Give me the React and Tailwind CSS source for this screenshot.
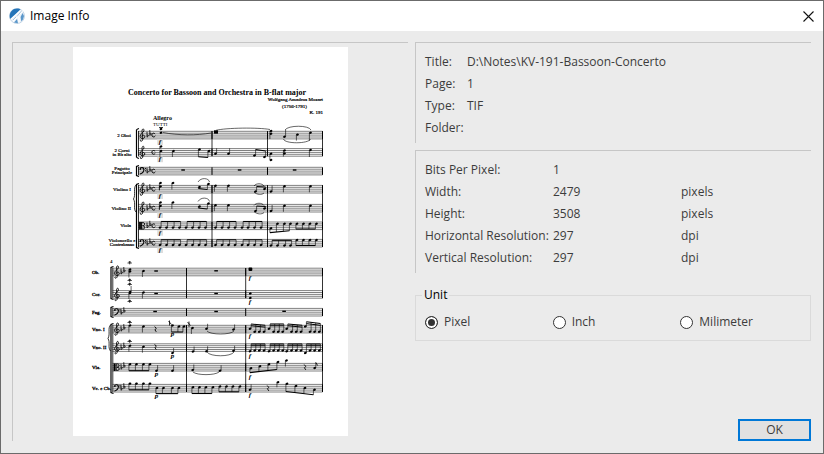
import React, { useState } from "react";

const SERIF = '"Liberation Serif", serif';

const documentRows = [
  { label: "Title:", value: "D:\\Notes\\KV-191-Bassoon-Concerto" },
  { label: "Page:", value: "1" },
  { label: "Type:", value: "TIF" },
  { label: "Folder:", value: "" },
];

const imageRows = [
  { label: "Bits Per Pixel:", value: "1", unit: "" },
  { label: "Width:", value: "2479", unit: "pixels" },
  { label: "Height:", value: "3508", unit: "pixels" },
  { label: "Horizontal Resolution:", value: "297", unit: "dpi" },
  { label: "Vertical Resolution:", value: "297", unit: "dpi" },
];

const units = ["Pixel", "Inch", "Milimeter"];

/* ---------- score drawing ---------- */

const Staff = ({ x, y, bars }) => (
  <g stroke="#000" strokeWidth="0.5">
    {[0, 1, 2, 3, 4].map((i) => (
      <line key={i} x1={x} x2={322.5} y1={y + i * 1.9} y2={y + i * 1.9} />
    ))}
    {bars.map((b) => (
      <line key={b} x1={b} x2={b} y1={y} y2={y + 7.6} strokeWidth="1" />
    ))}
  </g>
);

const Treble = ({ x, y }) => (
  <path
    d={`M${x} ${y + 9.5}c-1.6 1.4-2.4-.8-.9-.9M${x + 0.2} ${y + 9.6}c1 -1 .3-4-.2-9.5c-.1-3 2.2-3.4 1.9-.6c-.3 2-3.9 3-3.8 5.6c.2 3 4.9 2.6 4.7.2c-.2-2.1-3.3-1.7-2.9.2`}
    fill="none"
    stroke="#000"
    strokeWidth="0.9"
  />
);

const Bass = ({ x, y }) => (
  <g fill="none" stroke="#000" strokeWidth="1.1">
    <path d={`M${x - 2} ${y + 2}c.2-2.2 4-2.3 3.9.4c-.1 2-1.8 3.6-4 4.4`} />
    <path d={`M${x - 2.2} ${y + 2}h1.2M${x + 3} ${y + 1.2}h.9M${x + 3} ${y + 3.4}h.9`} />
  </g>
);

const Alto = ({ x, y }) => (
  <g stroke="#000" fill="none">
    <path d={`M${x - 2} ${y}v7.6`} strokeWidth="1.8" />
    <path
      d={`M${x - 0.4} ${y}v7.6M${x} ${y + 0.8}c3.4-1.4 3.2 3.4.6 3c2.8-.4 2.8 4.4-.6 3`}
      strokeWidth="1"
    />
  </g>
);

const Flats = ({ x, y }) => (
  <path
    d={`M${x} ${y + 0.5}v5.4c2.2-1.6 1.6-2.8 0-2M${x + 2.8} ${y - 1.2}v5.4c2.2-1.6 1.6-2.8 0-2`}
    fill="none"
    stroke="#000"
    strokeWidth="0.8"
  />
);

const CommonTime = ({ x, y }) => (
  <path
    d={`M${x + 1.6} ${y + 2.7}c-1.4-1.6-3.4-.6-3.2 1.3c.2 1.9 2.4 2.2 3.4.6`}
    fill="none"
    stroke="#000"
    strokeWidth="1"
  />
);

const clefs = { treble: Treble, bass: Bass, alto: Alto };

const Head = ({ x, y }) => (
  <ellipse cx={x} cy={y} rx="1.4" ry="1.1" transform={`rotate(-20 ${x} ${y})`} />
);

// s: stem length, negative goes up
const Note = ({ x, y, s }) => {
  const sx = s < 0 ? x + 1.1 : x - 1.1;
  return (
    <g>
      <Head x={x} y={y} />
      <line x1={sx} x2={sx} y1={y} y2={y + s} stroke="#000" strokeWidth="0.6" />
    </g>
  );
};

const Beam = ({ notes, from, to = from, double }) => {
  const up = from < notes[0][1];
  const dx = up ? 1.1 : -1.1;
  const first = notes[0][0];
  const last = notes[notes.length - 1][0];
  const at = (x) => from + ((to - from) * (x - first)) / (last - first);
  return (
    <g>
      {notes.map(([x, y]) => (
        <g key={x}>
          <Head x={x} y={y} />
          <line x1={x + dx} x2={x + dx} y1={y} y2={at(x)} stroke="#000" strokeWidth="0.6" />
        </g>
      ))}
      <line x1={first + dx} x2={last + dx} y1={from} y2={to} stroke="#000" strokeWidth="1.1" />
      {double && (
        <line x1={first + dx} x2={last + dx} y1={from + 1.8} y2={to + 1.8} stroke="#000" strokeWidth="1" />
      )}
    </g>
  );
};

const Mark = ({ x, y, boxed, children }) => (
  <g>
    {boxed && <rect x={x - 2.8} y={y - 3} width="5.8" height="5.6" fill="#ddd" />}
    <text x={x} y={y + 1.8} fontSize="7" fontStyle="italic" fontWeight="bold" textAnchor="middle">
      {children}
    </text>
  </g>
);

const Ornament = ({ x, y }) => (
  <path d={`M${x - 2.2} ${y}h4.4M${x - 1.2} ${y - 1}h2.4M${x} ${y - 2}v3.4`} stroke="#000" strokeWidth="0.7" />
);

const Rest = ({ x, y }) => <rect x={x - 1.7} y={y - 0.7} width="3.6" height="1.4" />;

const QuarterRest = ({ x, y }) => (
  <path d={`M${x - 0.8} ${y - 2.5}l1.6 2l-1.4 1.2l1.4 2.2`} fill="none" stroke="#000" strokeWidth="0.9" />
);

const Slur = ({ d }) => <path d={d} fill="none" stroke="#000" strokeWidth="0.6" />;

const firstSystem = [
  { y: 131.3, clef: "treble", flats: true, labels: ["2 Oboi"] },
  { y: 148.6, clef: "treble", labels: ["2 Corni", "in B♭ alto"] },
  { y: 167.3, clef: "bass", flats: true, labels: ["Fagotto", "Principale"] },
  { y: 185.4, clef: "treble", flats: true, labels: ["Violino I"] },
  { y: 204.4, clef: "treble", flats: true, labels: ["Violino II"] },
  { y: 222, clef: "alto", flats: true, labels: ["Viola"] },
  { y: 239.4, clef: "bass", flats: true, labels: ["Violoncello e", "Contrabasso"] },
];

const secondSystem = [
  { y: 268.2, clef: "treble", flats: true, label: "Ob." },
  { y: 290.6, clef: "treble", label: "Cor." },
  { y: 308.4, clef: "bass", flats: true, label: "Fag." },
  { y: 325.3, clef: "treble", flats: true, label: "Vno. I" },
  { y: 343.8, clef: "treble", flats: true, label: "Vno. II" },
  { y: 363.4, clef: "alto", flats: true, label: "Vla." },
  { y: 384.4, clef: "bass", flats: true, label: "Vc. e Cb." },
];

const eighths = (xs, y) => xs.map((x) => [x, y]);

const ViolinOpening = ({ dy }) => (
  <g transform={`translate(0 ${dy})`}>
    <Note x={160.5} y={183} s={7} />
    <Note x={160.5} y={186.5} s={4} />
    <Note x={173} y={183} s={6.5} />
    <Beam notes={[[199.5, 187], [208.5, 184]]} from={188.5} to={189.5} />
    <Slur d="M198 182c3-5 11-4 11.5 0" />
    <Note x={215.5} y={185.7} s={6} />
    <Note x={228.5} y={185.7} s={6} />
    <Beam notes={[[255.5, 191.5], [264.5, 189]]} from={186.5} to={187} />
    <Slur d="M254 186c2-3 8-3 10 0M254 192c3 3 8 3 10 1" />
    <Note x={271} y={191.5} s={-6} />
    <Note x={284.5} y={186.3} s={6} />
    <Note x={310.5} y={186.3} s={6} />
  </g>
);

const sixteenthGroups = [
  [250, 254.7, 259.3, 264],
  [269, 273.6, 278.2, 282.7],
  [286.7, 291.5, 296.2, 301],
  [305.3, 310, 314.6, 319.3],
];

const Score = () => (
  <svg
    viewBox="73 47 275 389"
    className="w-[275px] h-auto bg-white"
    fontFamily={SERIF}
    role="img"
    aria-label="Score page"
  >
    <text x="217" y="95" fontSize="8" fontWeight="bold" textAnchor="middle">
      Concerto for Bassoon and Orchestra in B-flat major
    </text>
    <g fontSize="5" textAnchor="end" stroke="#000" strokeWidth="0.2">
      <text x="323" y="101">Wolfgang Amadeus Mozart</text>
      <text x="307" y="108">(1756-1791)</text>
      <text x="323" y="114">K. 191</text>
    </g>
    <text x="153" y="120" fontSize="6" fontWeight="bold">Allegro</text>
    <text x="153" y="126" fontSize="5">TUTTI</text>

    {/* first system */}
    {firstSystem.map(({ y, clef, flats, labels }) => {
      const Clef = clefs[clef];
      return (
        <g key={y}>
          <Staff x={138} y={y} bars={[212, 267.5, 322.5]} />
          <Clef x={142} y={y} />
          {flats && <Flats x={147} y={y} />}
          <CommonTime x={153.5} y={y} />
          {labels.map((label, i) => (
            <text
              key={label}
              x={labels.length > 1 ? 122 : 131}
              y={y + 5.3 + (labels.length > 1 ? i * 4 - 2.4 : 0)}
              fontSize="5"
              textAnchor={labels.length > 1 ? "middle" : "end"}
              stroke="#000"
              strokeWidth="0.2"
            >
              {label}
            </text>
          ))}
          {clef !== "bass" || y > 200 ? <Mark x={160} y={y + 11} boxed>f</Mark> : null}
        </g>
      );
    })}
    <path
      d="M138.5 131v25M138.500 167v8M138.5 185v62M212 185v62M267.5 185v62M322.5 185v62M212 131v25M267.5 131v25M322.5 131v25"
      stroke="#000"
      strokeWidth="0.8"
    />
    <path
      d="M139 128.5q-2 .5-2.5 1.5v27q.5 1 2.5 1.5M139 165.5l-2.5 1v9l2.5 1M139 183.5l-2.5 1v63l2.5 1"
      fill="none"
      stroke="#000"
      strokeWidth="1.2"
    />
    <path d="M136 185c-3 3 0 10-2.5 14c2.5 4-.5 10 2.5 13" fill="none" stroke="#000" strokeWidth="0.8" />

    <Head x={161} y={132.8} />
    <Head x={161} y={129} />
    <path d="M159 127.5h4" stroke="#000" strokeWidth="0.8" />
    <Slur d="M163 132.5c15 3 34 3 48 .5" />
    <rect x="214" y="130.3" width="4" height="3.4" />
    <Slur d="M216 130.3c10-2.5 42-3 54-.8" />
    <Note x={271} y={131} s={8} />
    <Head x={271} y={133.8} />
    <Note x={284.5} y={136.8} s={-7} />
    <Note x={297.5} y={134.6} s={6} />
    <Note x={310.5} y={132.8} s={8} />
    <Slur d="M285 130c3-5 24-5 26 0M283.500 139c1 5 25 5 27 0" />

    <Note x={161} y={151} s={6} />
    <Note x={161} y={146.5} s={3} />
    <Note x={173.5} y={151} s={6} />
    <Beam notes={[[199.5, 149.5], [209, 151]]} from={156.8} to={157.5} />
    <Note x={215.5} y={153.8} s={-5.5} />
    <Note x={228.5} y={153.8} s={-5.5} />
    <Beam notes={[[254.5, 155.5], [264.5, 157]]} from={149.5} to={151} />
    <Note x={271} y={153.8} s={6} />
    <Head x={271} y={160} />
    <Note x={284.5} y={150.5} s={6} />
    <Head x={284.5} y={153.5} />
    <Note x={310.5} y={150} s={7} />

    <Rest x={183} y={170} />
    <Rest x={239.5} y={170} />
    <Rest x={294.5} y={170} />

    <ViolinOpening dy={0} />
    <ViolinOpening dy={19.5} />

    {[
      [160, 166.5, 173, 179.5],
      [186, 192.5, 199, 205.5],
      [215.5, 222, 228.5, 235],
      [242, 248, 254.5, 261],
    ].map((xs) => (
      <g key={xs[0]}>
        <Beam notes={eighths(xs, 227.6)} from={221.5} />
        <Beam notes={eighths(xs, 245)} from={239.8} />
      </g>
    ))}
    <Beam notes={[[271, 228.3], [277.5, 223.8], [284.5, 223.8], [290.5, 223.8]]} from={232.6} to={230.8} />
    <Beam notes={eighths([297, 303.5, 310, 316.5], 223.8)} from={229} />
    <Beam notes={eighths([271, 277.5, 284.5, 290.5], 245.5)} from={240.3} />
    <Beam notes={eighths([297, 303.5, 310, 316.5], 240)} from={245.5} />

    {/* second system */}
    <text x="110" y="263" fontSize="5" fontWeight="bold">4</text>
    {secondSystem.map(({ y, clef, flats, label }) => {
      const Clef = clefs[clef];
      return (
        <g key={y}>
          <Staff x={112.5} y={y} bars={[186.5, 245.7, 322.5]} />
          <Clef x={116.5} y={y} />
          {flats && <Flats x={121} y={y} />}
          <text x="92" y={y + 5.5} fontSize="5" stroke="#000" strokeWidth="0.3">
            {label}
          </text>
        </g>
      );
    })}
    <path
      d="M112.8 268v30M112.8 308v8M112.8 325v67M186.5 268v30M186.5 325v67M245.7 268v30M245.7 325v67M322.5 268v30M322.5 325v67"
      stroke="#000"
      strokeWidth="0.8"
    />
    <path
      d="M113.5 266.5l-2.5 1v31l2.5 1M113.5 306.5l-2.5 1v9l2.5 1M113.5 323.5l-2.5 1v68l2.5 1"
      fill="none"
      stroke="#000"
      strokeWidth="1.2"
    />
    <path d="M110.5 325c-3 3 0 9-2.5 13.5c2.5 4-.5 9 2.5 12.5" fill="none" stroke="#000" strokeWidth="0.8" />

    <Ornament x={129.7} y={263} />
    <Ornament x={129.7} y={280.5} />
    <Ornament x={129.7} y={284.5} />
    <Ornament x={129.7} y={301.5} />
    <Ornament x={129.7} y={322.5} />
    <Ornament x={129.7} y={341.5} />
    <Note x={130} y={269.5} s={8} />
    <Head x={130} y={271.5} />
    <Note x={143.5} y={271} s={6} />
    <Note x={130} y={292} s={-6} />
    <Note x={130} y={293} s={6} />
    <Note x={143.5} y={292.5} s={6} />
    <Rest x={156} y={271} />
    <Rest x={156} y={293.5} />
    <Rest x={155} y={311.5} />
    <Rest x={216} y={270.8} />
    <Rest x={216} y={293.5} />
    <Rest x={216} y={311.5} />
    <Rest x={284} y={311.3} />
    <rect x="248.5" y="267.5" width="3.8" height="3.6" rx="1" />
    <Head x={250.3} y={293.5} />
    <Head x={250.3} y={298} />

    <Note x={130} y={325.5} s={7} />
    <Note x={143.5} y={326.5} s={6} />
    <Note x={130} y={345.7} s={6} />
    <Note x={143.5} y={346.7} s={6} />
    <QuarterRest x={155.5} y={329} />
    <QuarterRest x={155.5} y={346.8} />
    <path d="M168.5 321l3 3.5M169.5 325.5v-5M187.5 322l3 3.5M189 327v-5.5" stroke="#000" strokeWidth="0.8" />
    <Beam notes={[[172.5, 325.5], [179, 326.5], [184, 326.5]]} from={332} />
    <Note x={192.5} y={328} s={6} />
    <Note x={206.5} y={328.8} s={-5} />
    <Note x={233.5} y={329.5} s={-5} />
    <Slur d="M207 331c3 4 24 4 27 0M207 352c3 5 24 5 27 0" />
    <Note x={172.5} y={353} s={-5} />
    <Note x={193} y={351.5} s={-5} />
    <Note x={206.5} y={351.3} s={-5} />
    <Note x={233.5} y={350.8} s={-5} />
    {sixteenthGroups.map((xs, i) => (
      <g key={xs[0]}>
        <Beam
          notes={xs.map((x, n) => [x, n ? 331.8 : i === 3 ? 326.5 : 328.8])}
          from={i === 3 ? 321.8 : 324}
          to={i === 1 ? 324 : i === 3 ? 323.5 : 325.3}
          double
        />
        <Beam notes={xs.map((x, n) => [x, n ? 350.5 : i === 3 ? 353 : 351.3])} from={344} double />
      </g>
    ))}

    <Beam notes={eighths([130, 136.5, 143.5, 150], 364.3)} from={370.7} />
    <Note x={156.5} y={370.7} s={-5.5} />
    <Note x={172.5} y={370.7} s={-5.5} />
    <Note x={192.7} y={370} s={-5.5} />
    <Note x={220} y={370.7} s={-5.5} />
    <Slur d="M193 372c4 3.5 22 3.5 26 0" />
    <Beam notes={[[251, 368.3], [260, 366.3], [269, 364.3], [278, 362]]} from={372.6} to={369.5} />
    <Note x={286.5} y={360.5} s={6} />
    <QuarterRest x={305} y={367} />
    <Note x={314.7} y={368} s={-5.5} />
    <path d="M315.8 362.5l1.8 3" stroke="#000" strokeWidth="0.9" />

    <Beam notes={eighths([130, 136.5, 143.5, 150], 383.6)} from={389.8} />
    <Beam notes={eighths([157, 163.5, 172.5, 179], 388)} from={393.6} />
    <Beam notes={eighths([193, 199.5, 206, 213], 387.3)} from={393.5} />
    <Beam notes={eighths([220, 226.5, 233, 240], 386.5)} from={391.8} />
    <Note x={250} y={389.8} s={-5.5} />
    <QuarterRest x={268} y={388} />
    <Note x={278} y={382.3} s={5} />
    <Beam notes={[[287, 383.7], [296, 386], [305, 388], [314.5, 389.8]]} from={391.5} to={394.8} />

    {[278.5, 302, 336, 356, 377.5, 395].map((y) => (
      <Mark key={y} x={250} y={y}>f</Mark>
    ))}
    <Mark x={172.5} y={334.5}>p</Mark>
    <Mark x={172.5} y={356.5}>p</Mark>
    <Mark x={156.5} y={373.8}>p</Mark>
    <Mark x={156.5} y={396}>p</Mark>
  </svg>
);

/* ---------- dialog ---------- */

const AppIcon = () => (
  <svg viewBox="0 0 16 16" className="size-4">
    <circle cx="8" cy="8" r="7.5" fill="#e9f0f7" stroke="#b9cde0" strokeWidth="0.8" />
    <path d="M1 10.5C-.4 5 3 .6 8 .5C10 .5 11 1 11.5 1.5L7 6.5L1.800 11.500z" fill="#2474b8" />
    <path d="M5 14.5L8 11l1 4.300zM13.500 5l1.500 3l-1 3.500l-1.800 1.800l-.6-4.300z" fill="#5b97ca" />
    <path d="M1.500 11.500L11.500 2.500M4 13.500L13.500 3M10 14.5V8.500" stroke="#fff" strokeWidth="1.3" />
    <path d="M8 8.500L12.500 3M4 12l3-3" stroke="#8fb3d3" strokeWidth="0.7" />
  </svg>
);

const Panel = ({ children }) => (
  <dl className="border-t border-l border-[#c6c6c6] pt-2 pb-1 pl-[9px] pr-0.5">{children}</dl>
);

const App = () => {
  const [unit, setUnit] = useState("Pixel");

  return (
    <div className="min-h-screen flex flex-col border border-[#6b6b6b] bg-[#ebebeb] font-['Open_Sans',sans-serif] text-[12px] leading-4 text-[#3c3c3c]">
      <header className="h-[30px] flex items-center bg-white pl-2 pr-[9px] text-black">
        <AppIcon />
        <h1 className="ml-[5px] flex-1">Image Info</h1>
        <button type="button" aria-label="Close">
          <svg viewBox="0 0 11 11" className="size-[11px]">
            <path d="M.5 .5l10 10M10.5 .5l-10 10" stroke="#111" strokeWidth="1.1" />
          </svg>
        </button>
      </header>

      <main className="flex-1 grid grid-cols-2 gap-[7px] pt-[11px] pb-3 pl-[11px] pr-3">
        <section className="flex justify-center items-start border-t border-l border-[#c6c6c6] pt-1">
          <Score />
        </section>

        <section className="flex flex-col">
          <Panel>
            {documentRows.map(({ label, value }) => (
              <div key={label} className="flex h-[22px] items-center">
                <dt className="w-[42px]">{label}</dt>
                <dd>{value}</dd>
              </div>
            ))}
          </Panel>

          <div className="mt-[7px]">
            <Panel>
              {imageRows.map(({ label, value, unit: suffix }) => (
                <div key={label} className="grid grid-cols-3 h-[22px] items-center">
                  <dt className="whitespace-nowrap">{label}</dt>
                  <dd>{value}</dd>
                  <dd>{suffix}</dd>
                </div>
              ))}
            </Panel>
          </div>

          <fieldset className="mt-3.5 border border-[#dadada] pl-[9px] pr-0.5 pt-[11px] pb-2.5">
            <legend className="-ml-[3px] px-0.5 text-black">Unit</legend>
            <div className="grid grid-cols-3">
              {units.map((name) => (
                <label key={name} className="flex items-center gap-1.5">
                  <input
                    type="radio"
                    name="unit"
                    value={name}
                    checked={unit === name}
                    onChange={() => setUnit(name)}
                    className="appearance-none size-[13px] rounded-full border border-[#333] bg-white checked:bg-[#333] checked:shadow-[inset_0_0_0_2px_white]"
                  />
                  {name}
                </label>
              ))}
            </div>
          </fieldset>

          <button
            type="button"
            className="mt-auto self-end w-[73px] h-[22px] flex items-center justify-center border-2 border-[#0078d7] bg-[#e1e1e1]"
          >
            OK
          </button>
        </section>
      </main>
    </div>
  );
};

export default App;
